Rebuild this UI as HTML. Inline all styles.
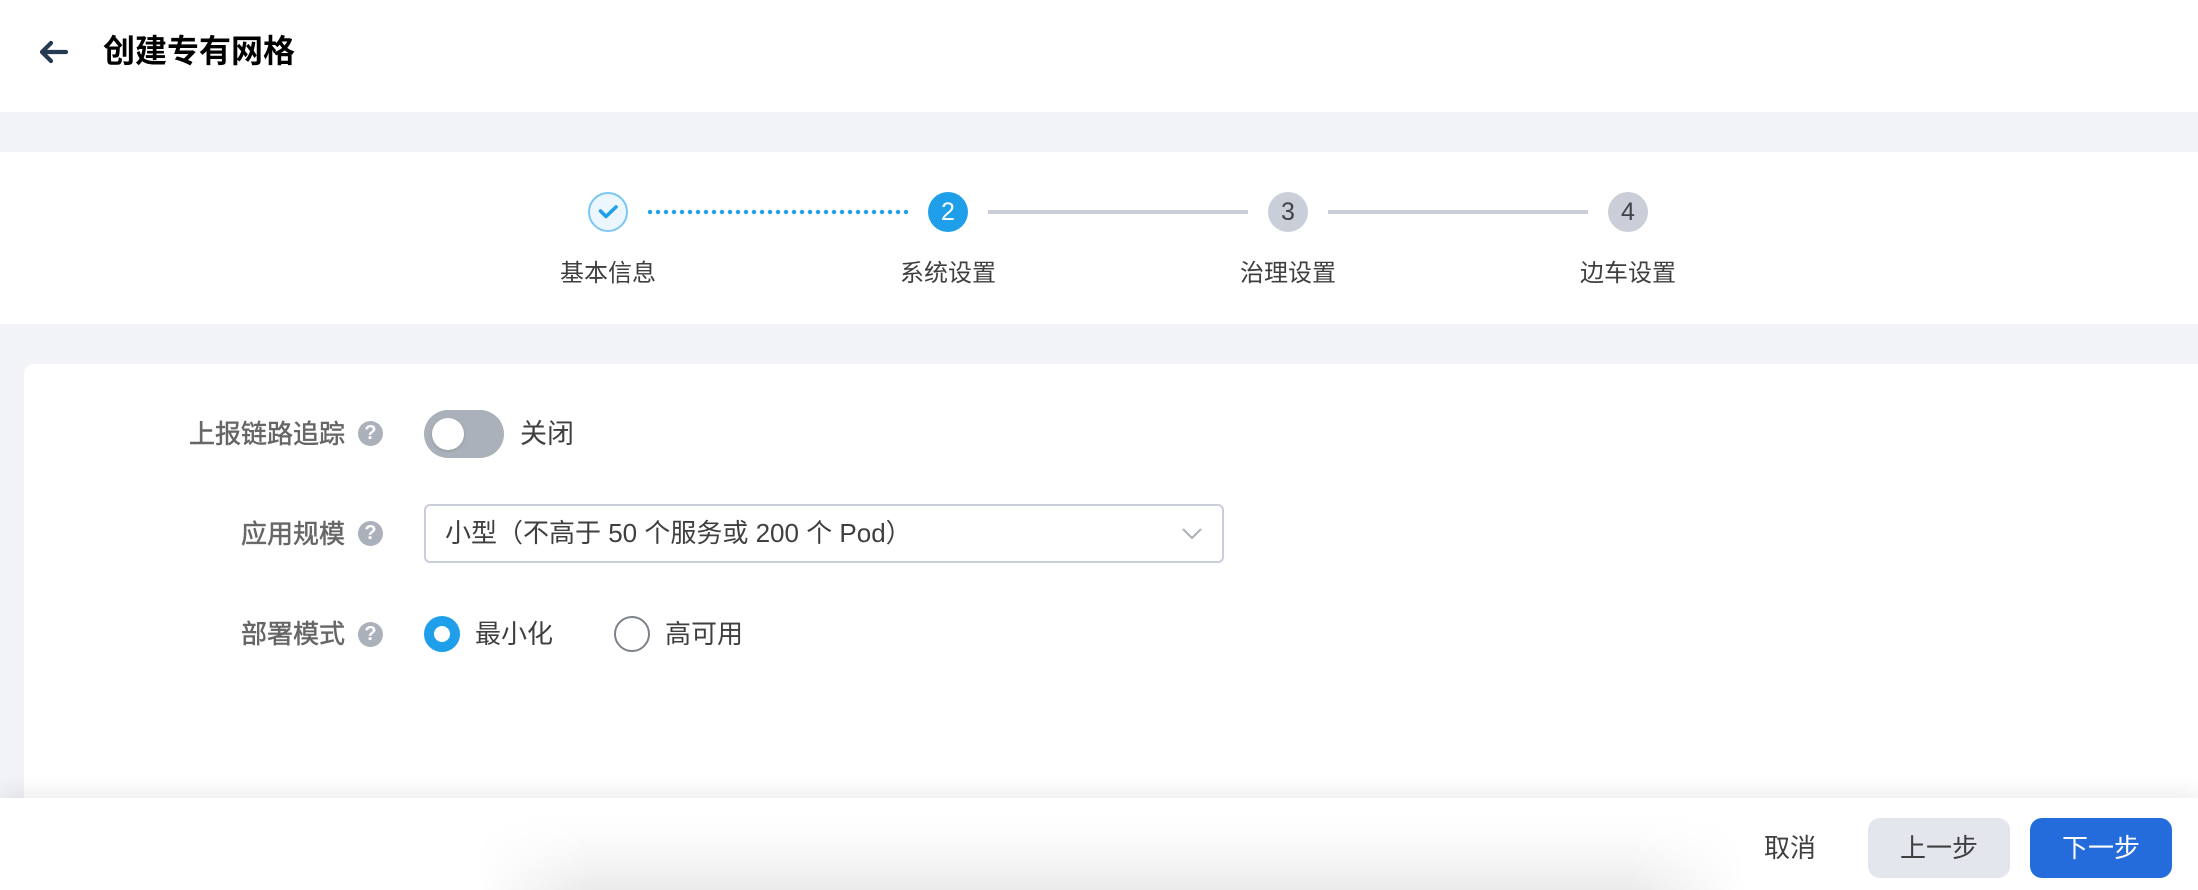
<!DOCTYPE html>
<html lang="zh">
<head>
<meta charset="utf-8">
<title>创建专有网格</title>
<style>
html,body{margin:0;padding:0;width:2198px;height:890px;overflow:hidden;background:#f1f3f6;font-family:"Liberation Sans","Noto Sans CJK SC",sans-serif;color:#3f3f3f}
.abs{position:absolute}
.t{position:absolute;white-space:nowrap;line-height:40px;height:40px}
.c{text-align:center;transform:translateX(-50%)}
.lab{font-size:26px;color:#666;text-align:right;right:1853px;-webkit-text-stroke:.5px #666}
.dot{position:absolute;width:40px;height:40px;border-radius:50%;top:192px;text-align:center;line-height:40px;font-size:25px}
.line{position:absolute;height:4px;top:210px;width:260px;background:#c9ced9}
.help{position:absolute;left:358px;width:25px;height:25px;border-radius:50%;background:#abb1ba;color:#fff;font-size:20px;font-weight:700;line-height:25px;text-align:center}
.btn{position:absolute;top:818px;width:142px;height:60px;border-radius:12px;text-align:center;line-height:60px;font-size:26px}
</style>
</head>
<body>
<div class="abs" style="left:0;top:0;width:2198px;height:112px;background:#fff"></div>
<svg class="abs" style="left:36px;top:37px" width="36" height="30" viewBox="0 0 36 30"><path d="M30 15H7M15 6l-9 9 9 9" fill="none" stroke="#243b53" stroke-width="4.2" stroke-linecap="round" stroke-linejoin="round"/></svg>
<div class="t" style="left:103px;top:31px;font-size:32px;font-weight:700;color:#000">创建专有网格</div>

<div class="abs" style="left:0;top:152px;width:2198px;height:172px;background:#fff"></div>
<div class="dot" style="left:588px;width:36px;height:36px;border:2px solid #7cc6f3;background:#ebf6fe"></div>
<svg class="abs" style="left:596px;top:202px" width="24" height="20" viewBox="0 0 24 20"><path d="M4.500 9l5.500 5.500L20 5" fill="none" stroke="#1f9fe9" stroke-width="3.6" stroke-linecap="round" stroke-linejoin="round"/></svg>
<svg class="abs" style="left:648px;top:208px" width="262" height="8"><line x1="2" y1="4" x2="260" y2="4" stroke="#1f9fe9" stroke-width="4.4" stroke-linecap="round" stroke-dasharray="0 8"/></svg>
<div class="dot" style="left:928px;background:#1f9fe9;color:#fff">2</div>
<div class="line" style="left:988px"></div>
<div class="dot" style="left:1268px;background:#c9ced9;color:#3f4247">3</div>
<div class="line" style="left:1328px"></div>
<div class="dot" style="left:1608px;background:#c9ced9;color:#3f4247">4</div>
<div class="t c" style="left:608px;top:254px;font-size:24px">基本信息</div>
<div class="t c" style="left:948px;top:254px;font-size:24px">系统设置</div>
<div class="t c" style="left:1288px;top:254px;font-size:24px">治理设置</div>
<div class="t c" style="left:1628px;top:254px;font-size:24px">边车设置</div>

<div class="abs" style="left:24px;top:364px;width:2174px;height:526px;background:#fff;border-radius:10px 0 0 0"></div>

<div class="t lab" style="top:414px">上报链路追踪</div>
<div class="help" style="top:421px">?</div>
<div class="abs" style="left:424px;top:410px;width:80px;height:48px;border-radius:24px;background:#abb1ba"></div>
<div class="abs" style="left:432px;top:418px;width:32px;height:32px;border-radius:50%;background:#fff;box-shadow:0 1px 3px rgba(0,0,0,.15)"></div>
<div class="t" style="left:520px;top:414px;font-size:27px">关闭</div>

<div class="t lab" style="top:514px">应用规模</div>
<div class="help" style="top:521px">?</div>
<div class="abs" style="left:424px;top:504px;width:796px;height:55px;border:2px solid #c9ced9;border-radius:6px;background:#fff"></div>
<div class="t" style="left:445px;top:513px;font-size:26px">小型（不高于 50 个服务或 200 个 Pod）</div>
<svg class="abs" style="left:1180px;top:526px" width="24" height="16" viewBox="0 0 24 16"><path d="M3.500 3.500l8.500 8.500 8.500-8.500" fill="none" stroke="#abb0b8" stroke-width="2" stroke-linecap="round" stroke-linejoin="round"/></svg>

<div class="t lab" style="top:614px">部署模式</div>
<div class="help" style="top:622px">?</div>
<div class="abs" style="left:424px;top:616px;width:16px;height:16px;border:10px solid #1f9fe9;border-radius:50%;background:#fff"></div>
<div class="t" style="left:475px;top:614px;font-size:26px">最小化</div>
<div class="abs" style="left:614px;top:616px;width:32px;height:32px;border:2px solid #7d828a;border-radius:50%;background:#fff"></div>
<div class="t" style="left:665px;top:614px;font-size:26px">高可用</div>

<div class="abs" style="left:0;top:798px;width:2198px;height:92px;background:#fff;box-shadow:0 -4px 24px rgba(0,0,0,.09)"></div>
<div class="abs" style="left:475px;top:810px;width:1270px;height:80px;background:linear-gradient(to bottom,rgba(0,0,0,0),rgba(0,0,0,.012) 30%,rgba(0,0,0,.035) 60%,rgba(0,0,0,.08));-webkit-mask-image:linear-gradient(to right,transparent,#000 9%,#000 91%,transparent);mask-image:linear-gradient(to right,transparent,#000 9%,#000 91%,transparent)"></div>
<div class="t" style="left:1764px;top:828px;font-size:26px;line-height:40px">取消</div>
<div class="btn" style="left:1868px;background:#e3e6ed;color:#3f3f3f">上一步</div>
<div class="btn" style="left:2030px;background:#246cdc;color:#fff">下一步</div>
</body>
</html>
